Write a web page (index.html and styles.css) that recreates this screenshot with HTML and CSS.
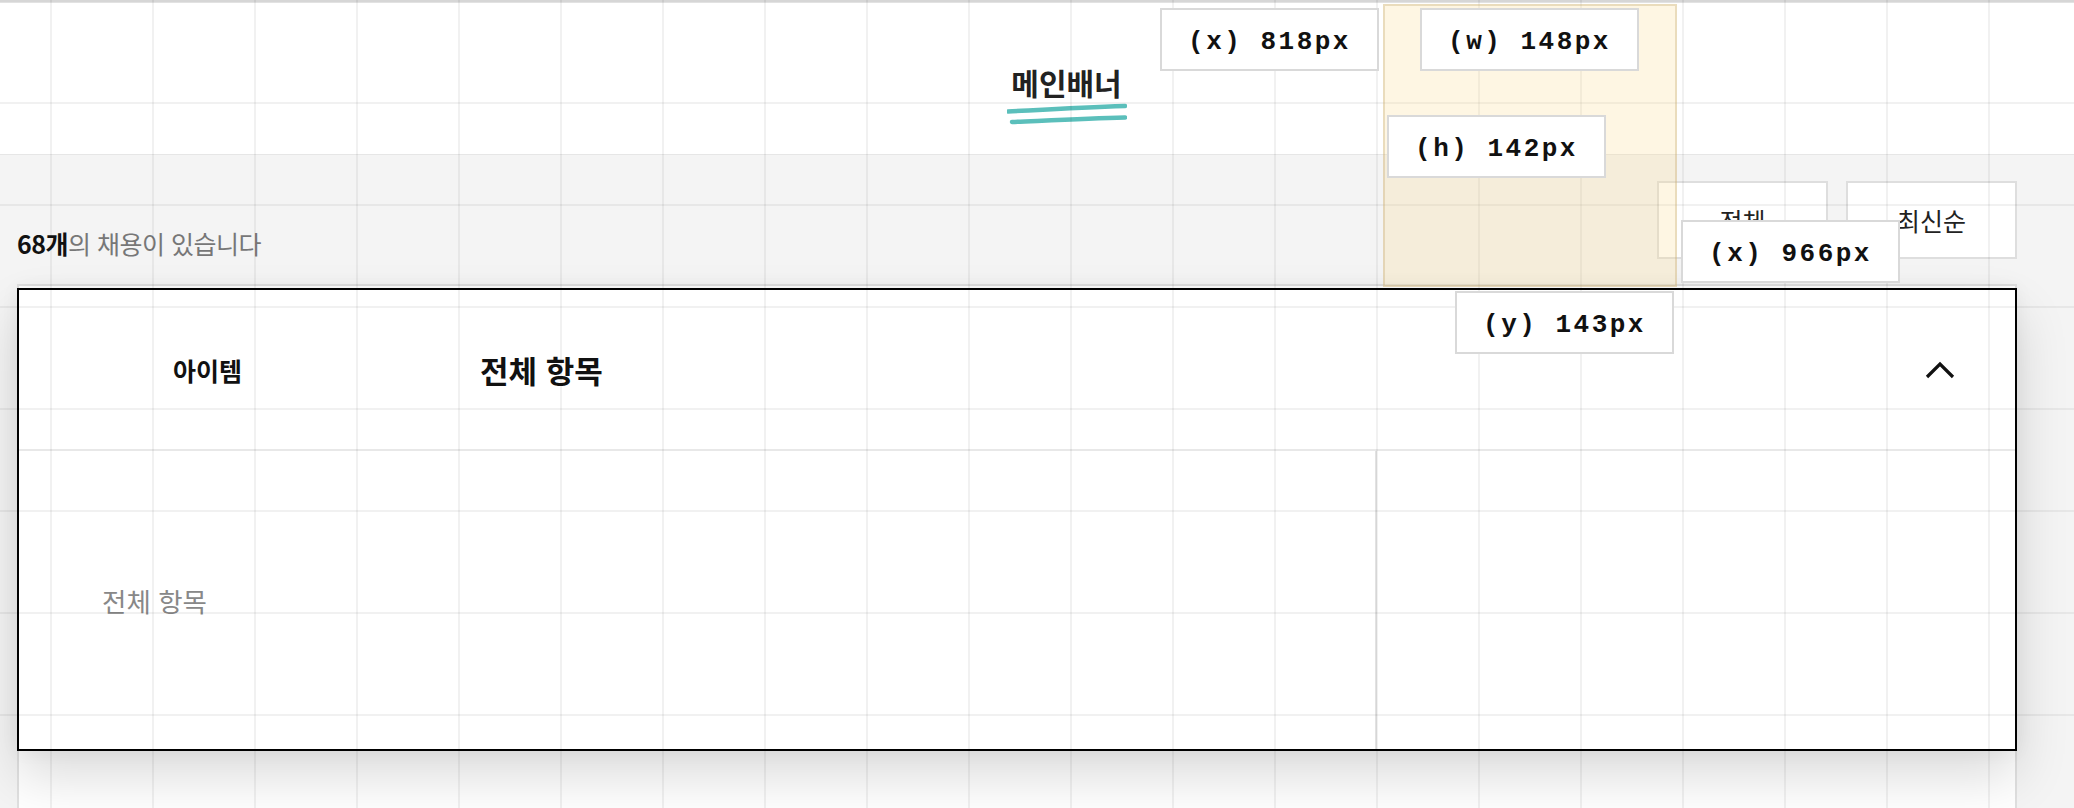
FILE: index.html
```html
<!DOCTYPE html>
<html lang="ko">
<head>
<meta charset="utf-8">
<title>메인배너</title>
<link rel="stylesheet" href="styles.css">
</head>
<body>
<div class="page">
  <div class="topbar"></div>
  <header class="header">
    <div class="title-wrap">
      <h1 class="title">메인배너</h1>
      <svg class="squiggle" width="120" height="22" viewBox="0 0 120 22">
        <path d="M1 8.5 C 30 7, 70 4.5, 118 3" stroke="#5bbfbb" stroke-width="4.5" fill="none" stroke-linecap="round"/>
        <path d="M5 19 C 40 17.5, 80 15.5, 118 14.5" stroke="#5bbfbb" stroke-width="4.5" fill="none" stroke-linecap="round"/>
      </svg>
    </div>
  </header>
  <section class="toolbar">
    <p class="count"><b>68개</b>의 채용이 있습니다</p>
    <div class="buttons">
      <button class="btn">전체</button>
      <button class="btn">최신순</button>
    </div>
  </section>
  <section class="list-card">
    <div class="dropdown">
      <div class="dd-head">
        <span class="dd-label">아이템</span>
        <span class="dd-value">전체 항목</span>
        <svg class="chevron" width="30" height="18" viewBox="0 0 30 18">
          <polyline points="2,16 15,3 28,16" fill="none" stroke="#111" stroke-width="3.2"/>
        </svg>
      </div>
      <div class="dd-body">
        <div class="dd-col-left"><span class="dd-item">전체 항목</span></div>
        <div class="dd-col-right"></div>
      </div>
    </div>
  </section>

  <div class="grid-overlay"></div>
  <div class="highlight"></div>
  <div class="measure m-x1">(x) 818px</div>
  <div class="measure m-w">(w) 148px</div>
  <div class="measure m-h">(h) 142px</div>
  <div class="measure m-x2">(x) 966px</div>
  <div class="measure m-y">(y) 143px</div>
</div>
</body>
</html>
```

FILE: styles.css
```css
* { box-sizing: border-box; }
html, body {
  margin: 0;
  padding: 0;
  width: 2074px;
  height: 808px;
  overflow: hidden;
  background: #f4f4f4;
  font-family: "Noto Sans CJK KR", "Noto Sans", sans-serif;
}
.page {
  position: relative;
  width: 2074px;
  height: 808px;
}
.topbar {
  height: 3px;
  background: #e2e2e2;
}
.header {
  height: 152px;
  background: #fff;
  border-bottom: 1px solid #e6e6e6;
  display: flex;
  justify-content: center;
  padding-left: 59px;
  padding-top: 63px;
}
.title-wrap {
  display: flex;
  flex-direction: column;
  align-items: center;
}
.title {
  margin: 0;
  font-size: 30px;
  line-height: 32px;
  font-weight: 700;
  color: #222;
  letter-spacing: 0;
}
.squiggle {
  display: block;
  margin-top: 5px;
}
.toolbar {
  height: 129px;
  display: flex;
  justify-content: space-between;
  padding: 26px 57px 0 17px;
}
.count {
  margin: 0;
  align-self: flex-start;
  margin-top: 46px;
  font-size: 25px;
  line-height: 32px;
  color: #777;
  letter-spacing: -0.5px;
}
.count b {
  color: #111;
  font-weight: 700;
}
.buttons {
  display: flex;
  gap: 18px;
  height: 78px;
}
.btn {
  width: 171px;
  height: 78px;
  background: #fff;
  border: 2px solid #dedede;
  font-family: inherit;
  font-size: 25px;
  color: #222;
  padding: 0;
}
.list-card {
  position: relative;
  margin-left: 17px;
  width: 2000px;
  height: 560px;
  background: #fff;
  border: 2px solid #e0e0e0;
}
.dropdown {
  position: absolute;
  top: 2px;
  left: -2px;
  width: 2000px;
  height: 463px;
  background: #fff;
  border: 2px solid #000;
  box-shadow: 0 26px 50px rgba(0,0,0,0.14), 0 0 18px rgba(0,0,0,0.05);
  display: flex;
  flex-direction: column;
  z-index: 2;
}
.dd-head {
  height: 161px;
  display: flex;
  align-items: center;
  padding-left: 154px;
  padding-right: 60px;
  border-bottom: 2px solid #e8e8e8;
}
.dd-label {
  width: 307px;
  font-size: 25px;
  font-weight: 700;
  color: #111;
}
.dd-value {
  font-size: 31px;
  font-weight: 700;
  color: #111;
}
.chevron {
  margin-left: auto;
  display: block;
}
.dd-body {
  flex: 1;
  display: flex;
}
.dd-col-left {
  width: 1358px;
  border-right: 2px solid #e2e2e2;
  display: flex;
  align-items: center;
  padding-left: 83px;
}
.dd-item {
  font-size: 26.5px;
  color: #888;
}
.dd-col-right {
  flex: 1;
}
.grid-overlay {
  position: absolute;
  inset: 0;
  pointer-events: none;
  z-index: 5;
  background-image:
    linear-gradient(to right, rgba(0,0,0,0.055) 0, rgba(0,0,0,0.055) 2px, transparent 2px),
    linear-gradient(to bottom, rgba(0,0,0,0.055) 0, rgba(0,0,0,0.055) 2px, transparent 2px);
  background-size: 102px 102px;
  background-position: 50px 102px;
}
.highlight {
  position: absolute;
  left: 1383px;
  top: 4px;
  width: 294px;
  height: 283px;
  background: rgba(250, 218, 140, 0.24);
  border: 2px solid rgba(190, 160, 100, 0.3);
  z-index: 6;
}
.measure {
  position: absolute;
  width: 219px;
  height: 63px;
  padding-top: 5px;
  background: #fff;
  border: 2px solid #d9d9d9;
  font-family: "Liberation Mono", "Courier New", monospace;
  font-weight: 700;
  font-size: 26px;
  letter-spacing: 2.5px;
  color: #111;
  display: flex;
  align-items: center;
  justify-content: center;
  z-index: 7;
}
.m-x1 { left: 1160px; top: 8px; }
.m-w  { left: 1420px; top: 8px; }
.m-h  { left: 1387px; top: 115px; }
.m-x2 { left: 1681px; top: 220px; }
.m-y  { left: 1455px; top: 291px; }
```
